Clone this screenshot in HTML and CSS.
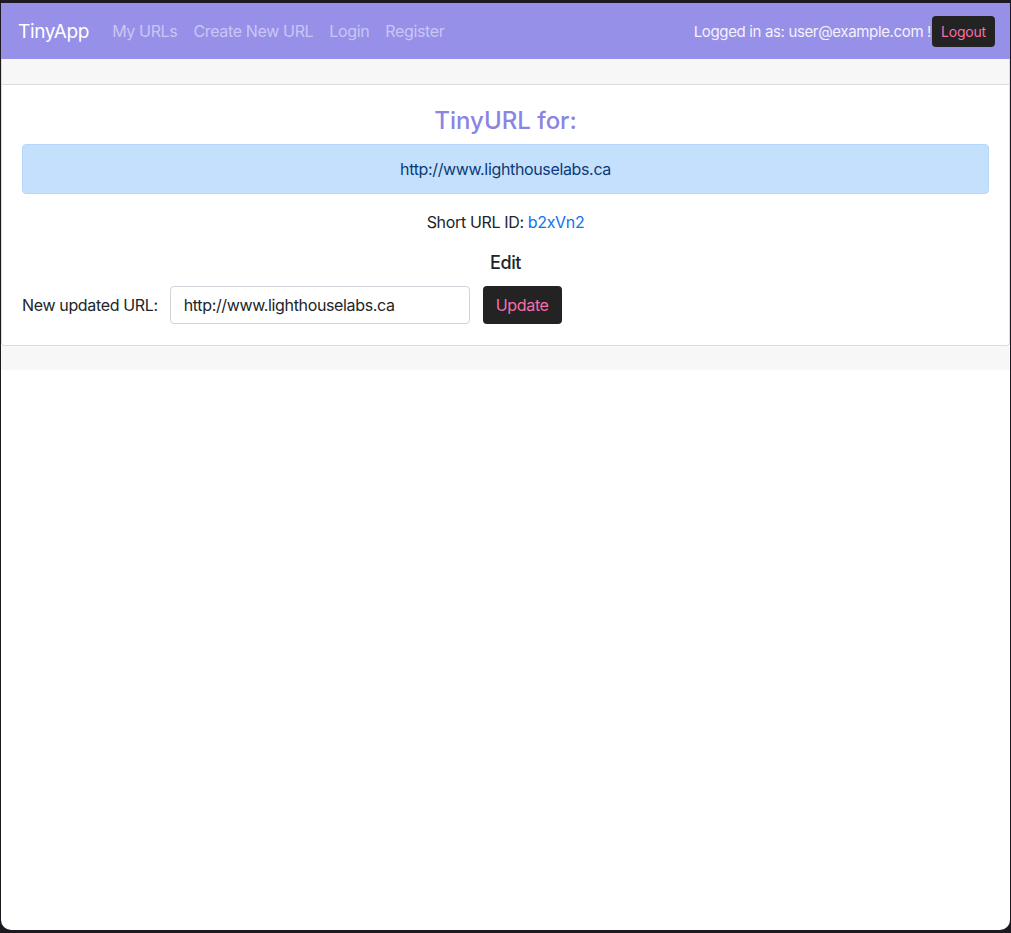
FILE: index.html
```html
<!DOCTYPE html>
<html>
<head>
<meta charset="utf-8">
<title>TinyApp</title>
<link rel="stylesheet" href="styles.css">
</head>
<body>
<div class="window">
  <nav class="navbar">
    <a class="brand" href="#">TinyApp</a>
    <div class="nav-links">
      <a href="#">My URLs</a>
      <a href="#">Create New URL</a>
      <a href="#">Login</a>
      <a href="#">Register</a>
    </div>
    <div class="nav-user">
      <span class="logged">Logged in as: user@example.com !</span>
      <button class="btn-logout">Logout</button>
    </div>
  </nav>
  <div class="card">
    <div class="card-header"></div>
    <div class="card-body">
      <h3 class="title">TinyURL for:</h3>
      <div class="alert">http://www.lighthouselabs.ca</div>
      <p class="short">Short URL ID: <a href="#">b2xVn2</a></p>
      <h5 class="edit">Edit</h5>
      <form class="form-row">
        <label>New updated URL:</label>
        <input type="text" value="http://www.lighthouselabs.ca">
        <button type="button" class="btn-update">Update</button>
      </form>
    </div>
  </div>
  <div class="footer"></div>
</div>
</body>
</html>
```

FILE: styles.css
```css
* { box-sizing: border-box; }
html, body { margin: 0; height: 100%; }
body {
  background: #1c1a20;
  font-family: Inter, "Noto Sans", "Liberation Sans", sans-serif;
  color: #212529;
  font-size: 16px;
  letter-spacing: -0.35px;
  padding: 3px 1px 3px 1px;
}
.window {
  background: #fff;
  height: 927px;
  border-radius: 0 0 10px 10px;
  overflow: hidden;
}
.navbar {
  height: 56px;
  background: #9690e9;
  display: flex;
  align-items: center;
  padding: 0 15px 0 17px;
}
.brand {
  color: #fff;
  text-decoration: none;
  font-size: 19px;
  margin-right: 23px;
}
.nav-links { display: flex; gap: 16px; }
.nav-links a {
  color: #cac6f4;
  text-decoration: none;
  font-size: 16px;
}
.nav-user { margin-left: auto; display: flex; align-items: center; }
.logged { color: #f4f2fc; font-size: 15px; margin-right: 1px; }
.btn-logout {
  background: #232323;
  color: #f66fab;
  border: none;
  border-radius: 4px;
  font-family: inherit;
  font-size: 14px;
  letter-spacing: -0.2px;
  height: 31px;
  padding: 0 9px;
  margin-top: 1px;
}
.card {
  border: 1px solid #dcdcdc;
  border-top: none;
  border-radius: 0 0 4px 4px;
}
.card-header {
  height: 26px;
  background: #f7f7f7;
  border-bottom: 1px solid #dcdcdc;
}
.card-body { padding: 19px 20px 21px 20px; text-align: center; }
.title {
  margin: 0 0 6px;
  font-size: 24px;
  letter-spacing: 0;
  font-weight: 500;
  color: #8a84e3;
  line-height: 34px;
}
.alert {
  background: #c5e0fd;
  border: 1px solid #b6d6fb;
  color: #0b3b78;
  border-radius: 4px;
  height: 50px;
  line-height: 48px;
  font-size: 16px;
  margin-bottom: 15px;
}
.short { margin: 0 0 16px; font-size: 16px; line-height: 26px; }
.short a { color: #0a74f0; text-decoration: none; }
.edit { margin: 0 0 11px; font-size: 18px; font-weight: 500; line-height: 24px; }
.form-row { display: flex; align-items: center; text-align: left; }
.form-row label { font-size: 16px; margin-right: 12px; }
.form-row input {
  width: 300px;
  height: 38px;
  border: 1px solid #ced4da;
  border-radius: 4px;
  padding: 0 13px;
  font-family: inherit;
  font-size: 16px;
  letter-spacing: -0.35px;
  color: #212529;
}
.btn-update {
  margin-left: 13px;
  height: 38px;
  width: 79px;
  background: #232323;
  color: #f66fab;
  border: none;
  border-radius: 4px;
  font-family: inherit;
  font-size: 16px;
  letter-spacing: -0.35px;
}
.footer { height: 24px; background: #f7f7f7; }
```
